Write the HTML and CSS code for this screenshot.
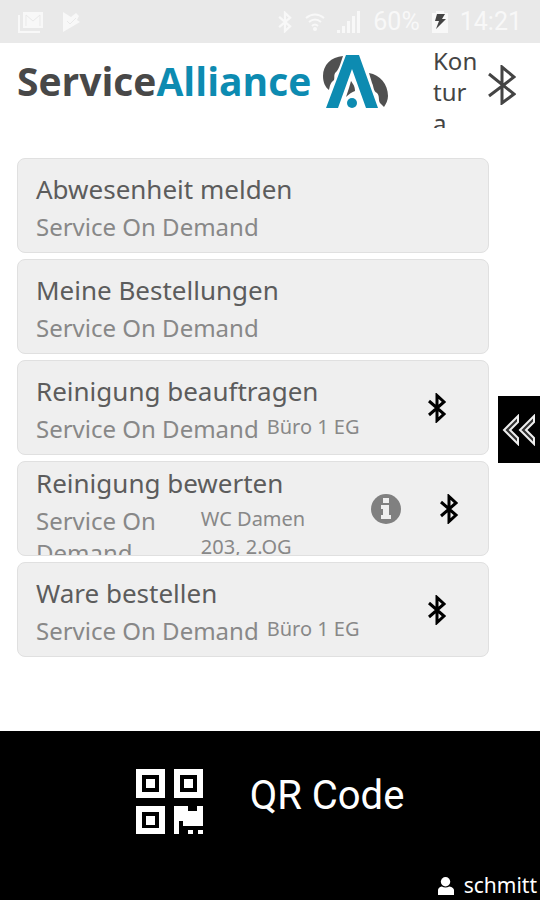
FILE: index.html
```html
<!DOCTYPE html>
<html lang="de">
<head>
  <meta charset="UTF-8" />
  <meta name="viewport" content="width=device-width, initial-scale=1" />
  <title>ServiceAlliance</title>
  <link rel="stylesheet" href="styles.css">
</head>
<body>
  <!-- Icons -->
  <svg class="sprite" aria-hidden="true">
    <symbol id="bluetooth" viewBox="0 0 20 30">
      <path d="M2 8 L17 21 L10 27.500 V2.500 L17 9 L2 22" fill="none" stroke="currentColor" stroke-width="3" />
    </symbol>
  </svg>

  <div class="statusbar">
    <svg width="26" height="22" viewBox="0 0 26 22">
      <path d="M1 4V21H22" fill="none" stroke="currentColor" stroke-width="2" />
      <path d="M5 1H25V17H5Z" fill="currentColor" />
      <path d="M8 15V4L15 10L22 4V15" fill="none" stroke="#e9e9e9" stroke-width="1" />
    </svg>
    <svg class="play" width="19" height="20" viewBox="0 0 19 20">
      <path d="M1 0L9 5L14 1L17 4L15 8L18 10L1 20Z" fill="currentColor" />
      <path d="M5 9L8 12L14 6" fill="none" stroke="#e9e9e9" />
    </svg>
    <div class="status-right">
      <svg width="16" height="22" viewBox="0 0 20 30"><use href="#bluetooth" /></svg>
      <svg width="20" height="18" viewBox="0 0 20 18">
        <path d="M1 5Q10 -2 19 5M4 9Q10 4 16 9M7 13Q10 10 13 13" fill="none" stroke="currentColor" stroke-width="2" />
        <circle cx="10" cy="16" r="2" fill="currentColor" />
      </svg>
      <svg width="24" height="22" viewBox="0 0 24 22">
        <path d="M0 19H3V22H0ZM5 15H8V22H5ZM10 10H13V22H10ZM15 5H18V22H15ZM20 0H23V22H20Z" fill="currentColor" />
      </svg>
      <span>60%</span>
      <svg width="16" height="22" viewBox="0 0 16 22">
        <path d="M0 2H4V0H12V2H16V22H0Z" fill="currentColor" />
        <path d="M5 3H13L10 8H14L4 18L7 10H3Z" fill="#444" />
      </svg>
      <span>14:21</span>
    </div>
  </div>

  <header>
    <h1><span>Service</span>Alliance</h1>
    <svg class="logo" width="66" height="54" viewBox="0 0 66 54">
      <path d="M20 1C8 2 0 10 0 21C0 27 2 32 6 35C7 31 7 28 11 25C12 22 10 19 14 16C16 13 17 10 18 7Z" fill="#505050" />
      <path d="M46 18C57 20 65 29 65 41C65 45 63 49 61 52L57 48C55 45 57 41 54 38C50 36 51 32 49 28Z" fill="#505050" />
      <path d="M28 26C30 29 32 31 32 36C29 37 26 39 23 42L26 33Z" fill="#505050" />
      <path d="M23 0H36L55 53H43L29 14L15 53H3Z" fill="#0d8bb1" />
      <circle cx="29" cy="48" r="5" fill="#0d8bb1" />
    </svg>
    <div class="device">Kontura</div>
    <svg class="device-icon" width="28" height="40" viewBox="0 0 28 40">
      <path d="M1 9L26 29L14 38V2L26 12L1 31" fill="none" stroke="currentColor" stroke-width="3" />
    </svg>
  </header>

  <main>
    <ul class="services">
      <li>
        <a class="card" href="#abwesenheit">
          <div class="info">
            <h2>Abwesenheit melden</h2>
            <p>Service On Demand</p>
          </div>
        </a>
      </li>
      <li>
        <a class="card" href="#bestellungen">
          <div class="info">
            <h2>Meine Bestellungen</h2>
            <p>Service On Demand</p>
          </div>
        </a>
      </li>
      <li>
        <a class="card" href="#beauftragen">
          <div class="info">
            <h2>Reinigung beauftragen</h2>
            <p>Service On Demand <small>Büro 1 EG</small></p>
          </div>
          <div class="tools">
            <svg width="20" height="30"><use href="#bluetooth" /></svg>
          </div>
        </a>
      </li>
      <li>
        <a class="card" href="#bewerten">
          <div class="info">
            <h2>Reinigung bewerten</h2>
            <p>Service On Demand <small>WC Damen 203, 2.OG</small></p>
          </div>
          <div class="tools double">
            <svg width="30" height="30" viewBox="0 0 30 30">
              <circle cx="15" cy="15" r="15" fill="#808080" />
              <path d="M12 4H18V9H12ZM10 11H18V21H20V25H10V21H12V15H10Z" fill="#efefef" />
            </svg>
            <svg width="20" height="30"><use href="#bluetooth" /></svg>
          </div>
        </a>
      </li>
      <li>
        <a class="card" href="#ware">
          <div class="info">
            <h2>Ware bestellen</h2>
            <p>Service On Demand <small>Büro 1 EG</small></p>
          </div>
          <div class="tools">
            <svg width="20" height="30"><use href="#bluetooth" /></svg>
          </div>
        </a>
      </li>
    </ul>
    <button class="side-tab" aria-label="Menü öffnen">
      <svg width="34" height="32" viewBox="0 0 34 32">
        <path d="M16 2V8L8 16L16 24V30L2 16ZM32 2V8L24 16L32 24V30L18 16Z" fill="#333" stroke="#eee" stroke-width="2" />
      </svg>
    </button>
  </main>

  <footer>
    <button class="qr">
      <svg width="67" height="65" viewBox="0 0 67 65" fill="#fff">
        <path fill-rule="evenodd" d="M0 0H29V29H0ZM6 6V23H23V6ZM38 0H67V29H38ZM44 6V23H61V6ZM0 37H29V65H0ZM6 43V59H23V43Z" />
        <path d="M10 10H19V19H10ZM48 10H57V19H48ZM10 47H19V56H10Z" />
        <path d="M38 37H52V42H61V37H67V57H47V52H43V65H38ZM52 61H57V65H52ZM62 61H67V65H62Z" />
      </svg>
      QR Code
    </button>
    <div class="user">
      <svg width="16" height="18" viewBox="0 0 17 19" fill="#fff">
        <circle cx="8" cy="5" r="5" />
        <path d="M0 19V14Q0 11 4 10Q8 12 12 10Q17 11 17 14V19Z" />
      </svg>
      schmitt
    </div>
  </footer>
</body>
</html>
```
FILE: styles.css
```css
* {
  box-sizing: border-box;
}

body {
  margin: 0;
  min-height: 100vh;
  display: flex;
  flex-direction: column;
  background: #fff;
  color: #444;
  font-family: "Noto Sans", "Open Sans", sans-serif;
}

svg {
  flex-shrink: 0;
}

.sprite {
  position: absolute;
  width: 0;
  height: 0;
}

button {
  border: none;
  padding: 0;
  cursor: pointer;
}

/* Statusleiste */
.statusbar {
  height: 43px;
  padding: 0 18px;
  display: flex;
  align-items: center;
  gap: 18px;
  background: #e9e9e9;
  color: #f8f8f8;
  font-family: Roboto, sans-serif;
  font-size: 25px;
}

.status-right {
  margin-left: auto;
  display: flex;
  align-items: center;
  gap: 12px;
}

.status-right span {
  line-height: 43px;
}

/* Header */
header {
  display: flex;
  align-items: flex-start;
  height: 85px;
  padding: 0 24px 0 17px;
}

header h1 {
  margin: 0;
  padding-top: 14px;
  font-family: "Open Sans", sans-serif;
  font-size: 39px;
  font-weight: 700;
  line-height: 48px;
  color: #0d8bb1;
}

header h1 span {
  color: #484848;
}

.logo {
  margin: 12px 0 0 12px;
}

.device {
  width: 45px;
  height: 85px;
  margin-left: auto;
  padding-top: 2px;
  overflow: hidden;
  word-break: break-all;
  font-size: 24px;
  line-height: 31px;
}

.device-icon {
  margin: 22px 0 0 10px;
}

/* Liste */
main {
  flex: 1;
  display: flex;
  align-items: center;
  gap: 9px;
  padding-left: 17px;
}

.services {
  flex: 1;
  min-width: 0;
  align-self: flex-start;
  margin: 0;
  padding: 30px 0;
  list-style: none;
  display: flex;
  flex-direction: column;
  gap: 6px;
}

.card {
  display: flex;
  height: 95px;
  padding-left: 18px;
  overflow: hidden;
  background: #efefef;
  border: 1px solid #e0e0e0;
  border-radius: 8px;
  color: #888;
  text-decoration: none;
}

.info {
  flex: 1;
  min-width: 0;
  display: flex;
  flex-direction: column;
  justify-content: safe center;
}

.info h2 {
  margin: 0;
  font-size: 26px;
  font-weight: 400;
  line-height: 43px;
  color: #5c5c5c;
}

.info p {
  display: flex;
  gap: 8px;
  margin: 0;
  font-size: 24px;
  line-height: 32px;
}

.info small {
  font-size: 20px;
  line-height: 28px;
}

.tools {
  width: 102px;
  display: flex;
  align-items: center;
  justify-content: center;
  gap: 38px;
  color: #000;
}

.tools.double {
  width: 146px;
}

.side-tab {
  display: flex;
  align-items: center;
  justify-content: center;
  width: 42px;
  height: 67px;
  background: #000;
}

/* Footer */
footer {
  background: #000;
  color: #fff;
}

.qr {
  width: 100%;
  height: 140px;
  padding-top: 38px;
  display: flex;
  align-items: flex-start;
  justify-content: center;
  gap: 47px;
  background: none;
  color: #fff;
  font-family: Roboto, sans-serif;
  font-size: 40px;
  line-height: 54px;
}

.user {
  display: flex;
  align-items: center;
  justify-content: flex-end;
  gap: 10px;
  padding-right: 3px;
  font-size: 21px;
  line-height: 29px;
}
```
